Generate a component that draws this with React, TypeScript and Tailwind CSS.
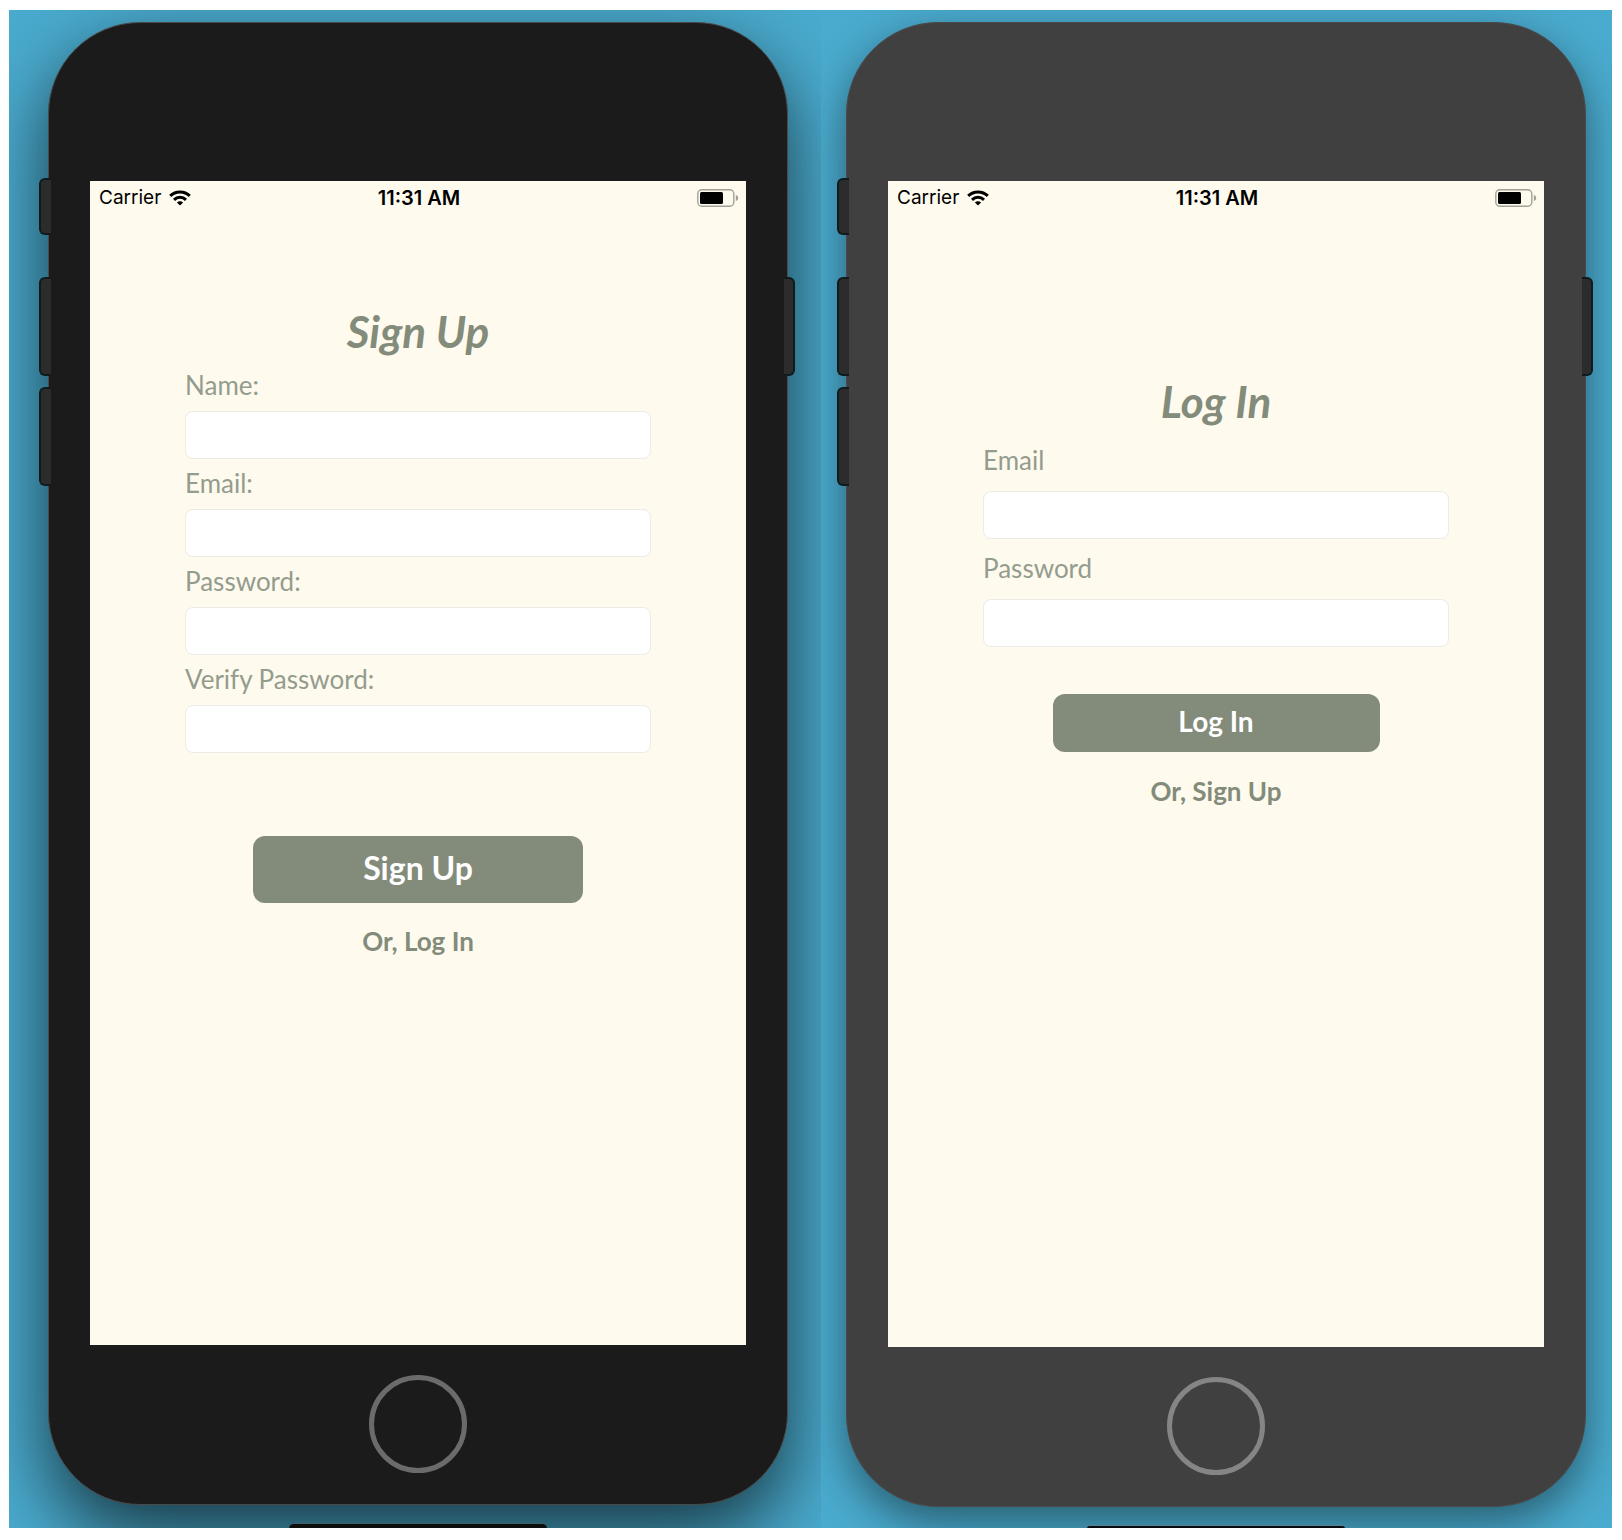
import type { ReactNode } from "react";

function WifiIcon() {
  return (
    <svg viewBox="0 0 22 16" className="h-4 w-[22px]" fill="none" stroke="#000" strokeWidth="3" aria-hidden="true">
      <path d="M1.2 5.9C6.6 0.6 15.4 0.6 20.8 5.9" />
      <path d="M5 9.8C8.4 6.5 13.6 6.5 17 9.8" />
      <path d="M11 15.6 7.9 12.4C9.7 10.9 12.3 10.9 14.1 12.4Z" fill="#000" stroke="none" />
    </svg>
  );
}

function BatteryIcon() {
  return (
    <svg viewBox="0 0 42 18" className="h-[18px] w-[42px]" fill="none" aria-hidden="true">
      <rect x="0.8" y="0.8" width="36" height="16.4" rx="4" stroke="#a3a098" strokeWidth="1.4" />
      <rect x="3" y="3" width="23" height="12" rx="1.5" fill="#000" />
      <path d="M38.8 6v6c1.8-.6 2.4-1.700 2.400-3s-.6-2.400-2.400-3Z" fill="#a3a098" />
    </svg>
  );
}

function StatusBar() {
  return (
    <div className="grid h-[34px] grid-cols-3 items-center pr-[7px] pl-[9px] font-['Inter',sans-serif] leading-6 text-black">
      <div className="flex items-center gap-2">
        <span className="text-[19px]">Carrier</span>
        <WifiIcon />
      </div>
      <span className="text-center text-[20px] font-semibold">11:31 AM</span>
      <div className="flex justify-end">
        <BatteryIcon />
      </div>
    </div>
  );
}

function SideButtons() {
  return (
    <>
      <span className="absolute top-[155px] -left-[10px] h-[57px] w-3 rounded-l-md border-2 border-r-0 border-[#101b1e] bg-[#2c2c2c]" />
      <span className="absolute top-[254px] -left-[10px] h-[99px] w-3 rounded-l-md border-2 border-r-0 border-[#101b1e] bg-[#2c2c2c]" />
      <span className="absolute top-[364px] -left-[10px] h-[99px] w-3 rounded-l-md border-2 border-r-0 border-[#101b1e] bg-[#2c2c2c]" />
      <span className="absolute top-[254px] -right-[8px] h-[99px] w-[11px] rounded-r-md border-2 border-l-0 border-[#101b1e] bg-[#2c2c2c]" />
    </>
  );
}

function Phone({ body, screen, home, children }: { body: string; screen: string; home: string; children: ReactNode }) {
  return (
    <div className={`relative rounded-[92px] border border-[#4a4a4a] px-[41px] pt-[158px] pb-[31px] ${body}`}>
      <SideButtons />
      <main className={`bg-[#fefaee] pb-10 ${screen}`}>
        <StatusBar />
        {children}
      </main>
      <button type="button" aria-label="Home" className={`mx-auto mt-[30px] block size-[98px] rounded-full border-[5px] ${home}`} />
    </div>
  );
}

function Field({ id, label, type, className }: { id: string; label: string; type: string; className: string }) {
  return (
    <div className={`flex flex-col ${className}`}>
      <label htmlFor={id} className="text-[26px] leading-8 text-[#939c8d]">
        {label}
      </label>
      <input
        id={id}
        type={type}
        className="h-12 w-full rounded-lg border border-[#ecebe6] bg-white px-3 text-[26px] text-[#838b7b] outline-none"
      />
    </div>
  );
}

function Title({ children }: { children: ReactNode }) {
  return <h1 className="text-center text-[44px] leading-[48px] font-bold text-[#838b7b] italic">{children}</h1>;
}

const buttonClass = "mx-auto block w-full rounded-xl bg-[#838b7b] pb-1 font-bold text-white";
const linkClass = "text-[26px] leading-8 font-bold text-[#838b7b]";

export default function App() {
  return (
    <div className="bg-white pt-[10px] pr-[10px] pb-3 pl-[9px] font-['Lato',sans-serif]">
      <div className="grid grid-cols-[812fr_791fr] bg-[#4aabce]">
        <section className="overflow-hidden pt-3 pr-[33px] pl-[39px]">
          <Phone
            body="bg-[#1b1b1b] shadow-[0_30px_76px_rgba(0,0,0,0.68)]"
            screen="min-h-[1164px]"
            home="border-[#6b6b6b]"
          >
            <form className="px-[95px] pt-[92px]">
              <Title>Sign Up</Title>
              <div className="mt-[14px] flex flex-col gap-2">
                <Field id="signup-name" label="Name:" type="text" className="gap-[10px]" />
                <Field id="signup-email" label="Email:" type="email" className="gap-[10px]" />
                <Field id="signup-password" label="Password:" type="password" className="gap-[10px]" />
                <Field id="signup-verify" label="Verify Password:" type="password" className="gap-[10px]" />
              </div>
              <button type="button" className={`mt-[83px] h-[67px] max-w-[330px] text-[32px] leading-10 ${buttonClass}`}>
                Sign Up
              </button>
              <p className="mt-[22px] text-center">
                <a href="#login" className={linkClass}>
                  Or, Log In
                </a>
              </p>
            </form>
          </Phone>
          <div className="mx-auto mt-[18px] h-[5px] w-[258px] rounded-t-md border-t border-[#6fa6b5] bg-[#171717]" />
        </section>
        <section className="overflow-hidden pt-3 pr-[26px] pl-[25px]">
          <Phone
            body="bg-[#404040] shadow-[0_16px_44px_rgba(0,0,0,0.46)]"
            screen="min-h-[1166px]"
            home="border-[#858585]"
          >
            <form className="px-[95px] pt-[162px]">
              <Title>Log In</Title>
              <div className="mt-[19px] flex flex-col gap-[13px]">
                <Field id="login-email" label="Email" type="email" className="gap-[15px]" />
                <Field id="login-password" label="Password" type="password" className="gap-[15px]" />
              </div>
              <button type="button" className={`mt-[47px] h-[58px] max-w-[327px] text-[28px] leading-9 ${buttonClass}`}>
                Log In
              </button>
              <p className="mt-[23px] text-center">
                <a href="#signup" className={linkClass}>
                  Or, Sign Up
                </a>
              </p>
            </form>
          </Phone>
          <div className="mx-auto mt-[18px] h-[3px] w-[258px] rounded-t-md border-t border-[#6fa6b5] bg-[#0c1118]" />
        </section>
      </div>
    </div>
  );
}
